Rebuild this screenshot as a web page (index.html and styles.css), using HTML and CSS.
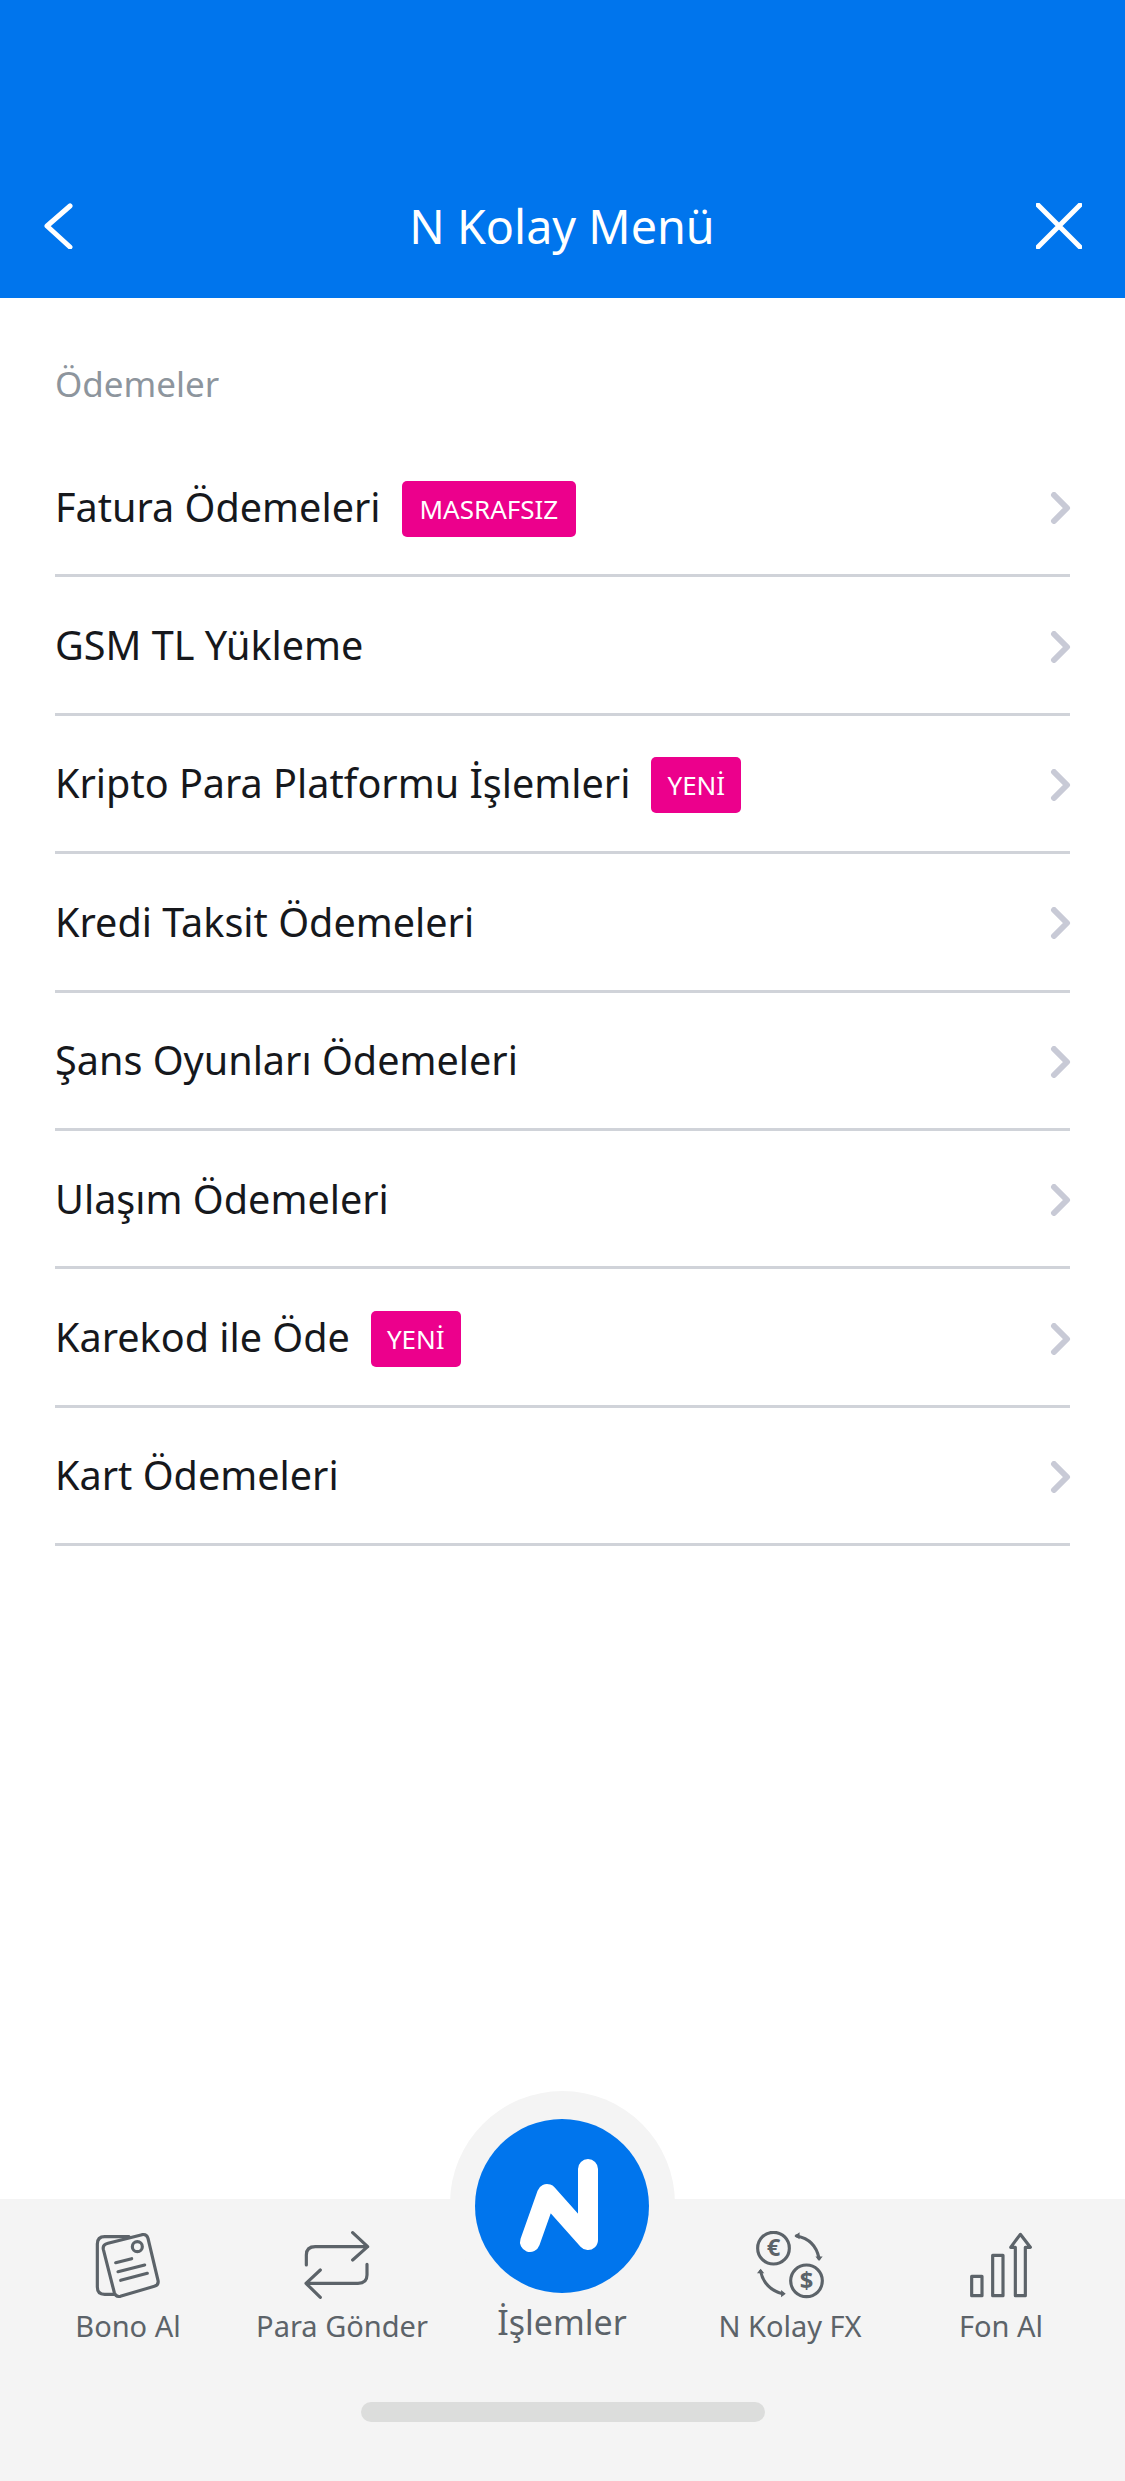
FILE: index.html
```html
<!DOCTYPE html>
<html lang="tr">
<head>
    <meta charset="UTF-8">
    <meta name="viewport" content="width=device-width, initial-scale=1.0">
    <title>N Kolay Menü</title>
    <link rel="stylesheet" href="styles.css">
</head>
<body>
    <header class="topbar">
        <svg class="top-icon" width="52" height="46" viewBox="0 0 52 46"><path d="M34 3 L11 23 L34 44"/></svg>
        <h1 class="title">N Kolay Menü</h1>
        <svg class="top-icon" width="46" height="46" viewBox="0 0 46 46"><path d="M2 2 L44 44 M44 2 L2 44"/></svg>
    </header>

    <main class="content">
        <h2 class="section">Ödemeler</h2>
        <ul class="menu">
            <li class="row"><span class="row-name">Fatura Ödemeleri</span><span class="badge">MASRAFSIZ</span>
                <svg class="chev" width="22" height="32" viewBox="0 0 22 32"><path d="M4 3 L17 16 L4 29"/></svg></li>
            <li class="row"><span class="row-name">GSM TL Yükleme</span>
                <svg class="chev" width="22" height="32" viewBox="0 0 22 32"><path d="M4 3 L17 16 L4 29"/></svg></li>
            <li class="row"><span class="row-name">Kripto Para Platformu İşlemleri</span><span class="badge badge-new">YENİ</span>
                <svg class="chev" width="22" height="32" viewBox="0 0 22 32"><path d="M4 3 L17 16 L4 29"/></svg></li>
            <li class="row"><span class="row-name">Kredi Taksit Ödemeleri</span>
                <svg class="chev" width="22" height="32" viewBox="0 0 22 32"><path d="M4 3 L17 16 L4 29"/></svg></li>
            <li class="row"><span class="row-name">Şans Oyunları Ödemeleri</span>
                <svg class="chev" width="22" height="32" viewBox="0 0 22 32"><path d="M4 3 L17 16 L4 29"/></svg></li>
            <li class="row"><span class="row-name">Ulaşım Ödemeleri</span>
                <svg class="chev" width="22" height="32" viewBox="0 0 22 32"><path d="M4 3 L17 16 L4 29"/></svg></li>
            <li class="row"><span class="row-name">Karekod ile Öde</span><span class="badge badge-new">YENİ</span>
                <svg class="chev" width="22" height="32" viewBox="0 0 22 32"><path d="M4 3 L17 16 L4 29"/></svg></li>
            <li class="row"><span class="row-name">Kart Ödemeleri</span>
                <svg class="chev" width="22" height="32" viewBox="0 0 22 32"><path d="M4 3 L17 16 L4 29"/></svg></li>
        </ul>
    </main>

    <nav class="tabbar">
        <div class="halo"></div>
        <a class="tab">
            <svg class="tab-icon" width="68" height="68" viewBox="100 60 204 204">
                <path d="M205 77 H132 Q110 77 110 99 V228 Q110 250 132 250 H162"/>
                <path d="M142 97 L244 71 Q258 68 262 82 L292 208 Q295 222 281 226 L179 256 Q165 259 161 245 L128 115 Q125 101 142 97 Z"/>
                <circle cx="230" cy="107" r="15"/>
                <path d="M165 155 L213 143 M172 182 L252 162 M180 208 L260 187"/>
            </svg>
            <span class="tab-label">Bono Al</span>
        </a>
        <a class="tab">
            <svg class="tab-icon tab-icon-left" width="68" height="68" viewBox="728 63 204 204">
                <path d="M877 68 L922 110 L877 150 M922 110 H765 Q738 110 738 135 V165"/>
                <path d="M780 180 L737 220 L780 262 M737 220 H893 Q920 220 920 195 V163"/>
            </svg>
            <span class="tab-label">Para Gönder</span>
        </a>
        <a class="tab tab-main">
            <div class="n-button">
                <svg class="n-logo" width="90" height="100" viewBox="0 0 90 100"><path d="M13 86 L30 38 L71 84 L71 13"/></svg>
            </div>
            <span class="tab-label tab-label-main">İşlemler</span>
        </a>
        <a class="tab">
            <svg class="tab-icon" width="68" height="68" viewBox="74 63 206 206">
                <circle cx="127" cy="115" r="48"/>
                <circle cx="227" cy="214" r="48"/>
                <text class="fx-sign" x="127" y="140">€</text>
                <text class="fx-sign" x="227" y="240">$</text>
                <path d="M197 78 C235 85 258 110 265 146 M88 185 C95 220 120 245 155 253"/>
                <path class="fill" d="M190 78 L206 67 L206 88 Z M265 154 L254 140 L276 140 Z M88 177 L77 191 L99 191 Z M164 253 L150 242 L150 264 Z"/>
            </svg>
            <span class="tab-label">N Kolay FX</span>
        </a>
        <a class="tab">
            <svg class="tab-icon" width="68" height="68" viewBox="710 63 204 204">
                <rect x="724" y="199" width="31" height="58"/>
                <rect x="787" y="136" width="31" height="121"/>
                <path d="M855 257 V112 H841 L870 73 L900 112 H885 V257 Z"/>
            </svg>
            <span class="tab-label">Fon Al</span>
        </a>
        <div class="home-bar"></div>
    </nav>
</body>
</html>
```

FILE: styles.css
```css
* { box-sizing: border-box; }
html, body { margin: 0; padding: 0; }
body {
    width: 1125px;
    height: 2481px;
    display: flex;
    flex-direction: column;
    background: #fff;
    font-family: "Noto Sans", "Open Sans", sans-serif;
    overflow: hidden;
}

/* top bar */
.topbar {
    height: 298px;
    background: #0075ed;
    display: flex;
    align-items: center;
    justify-content: space-between;
    padding: 203px 43px 49px 36px;
}
.title { margin: 0; color: #fff; font-size: 46.7px; font-weight: 400; line-height: 46px; }
.top-icon path { fill: none; stroke: #fff; stroke-width: 5; stroke-linecap: round; stroke-linejoin: round; }

/* list */
.content { flex: 1; padding: 0 55px; }
.section { margin: 0; height: 141px; padding-top: 64px; color: #8d959d; font-size: 35px; font-weight: 400; line-height: 44px; }
.menu { list-style: none; margin: 0; padding: 0; }
.row {
    height: 138.4px;
    display: flex;
    align-items: center;
    border-bottom: 3px solid #d0d3d9;
}
.row-name { color: #16181c; font-size: 39.6px; line-height: 50px; }
.badge {
    margin-left: 21px;
    margin-top: 4px;
    padding: 0 18px;
    height: 56px;
    border-radius: 5px;
    background: #ec008c;
    color: #fff;
    font-size: 26px;
    line-height: 56px;
}
.badge-new { padding: 0 16px; }
.chev { margin-left: auto; margin-right: -2px; margin-top: 3px; }
.chev path { fill: none; stroke: #c8cad6; stroke-width: 6; stroke-linecap: round; stroke-linejoin: round; }

/* bottom bar */
.tabbar {
    position: relative;
    height: 282px;
    background: #f4f4f4;
    display: grid;
    grid-template-columns: 256px 172px 268px 188px 234px;
    align-items: start;
    padding-top: 32px;
}
.halo {
    position: absolute;
    left: 450px;
    top: -108px;
    width: 225px;
    height: 225px;
    border-radius: 50%;
    background: #f4f4f4;
}
.tab { position: relative; display: flex; flex-direction: column; align-items: center; }
.tab-icon * { fill: none; stroke: #5c6369; stroke-width: 9.5; stroke-linecap: round; stroke-linejoin: round; }
.tab-icon .fill { fill: #5c6369; stroke: none; }
.tab-icon .fx-sign { fill: #5c6369; stroke: none; font-size: 72px; font-weight: 700; text-anchor: middle; font-family: "Noto Sans", sans-serif; }
.tab-icon-left { margin-right: 10px; }
.tab-label { margin-top: 7px; color: #5c6369; font-size: 29px; line-height: 40px; white-space: nowrap; }
.tab-main { margin-top: -112px; }
.n-button {
    width: 174px;
    height: 174px;
    border-radius: 50%;
    background: #0075ed;
    display: flex;
    align-items: center;
    justify-content: center;
}
.n-logo path { fill: none; stroke: #fff; stroke-width: 20; stroke-linecap: round; stroke-linejoin: round; }
.tab-label-main { margin-top: 9px; font-size: 34px; }
.home-bar {
    position: absolute;
    left: 361px;
    top: 203px;
    width: 404px;
    height: 20px;
    border-radius: 10px;
    background: #dcdddc;
}
```
